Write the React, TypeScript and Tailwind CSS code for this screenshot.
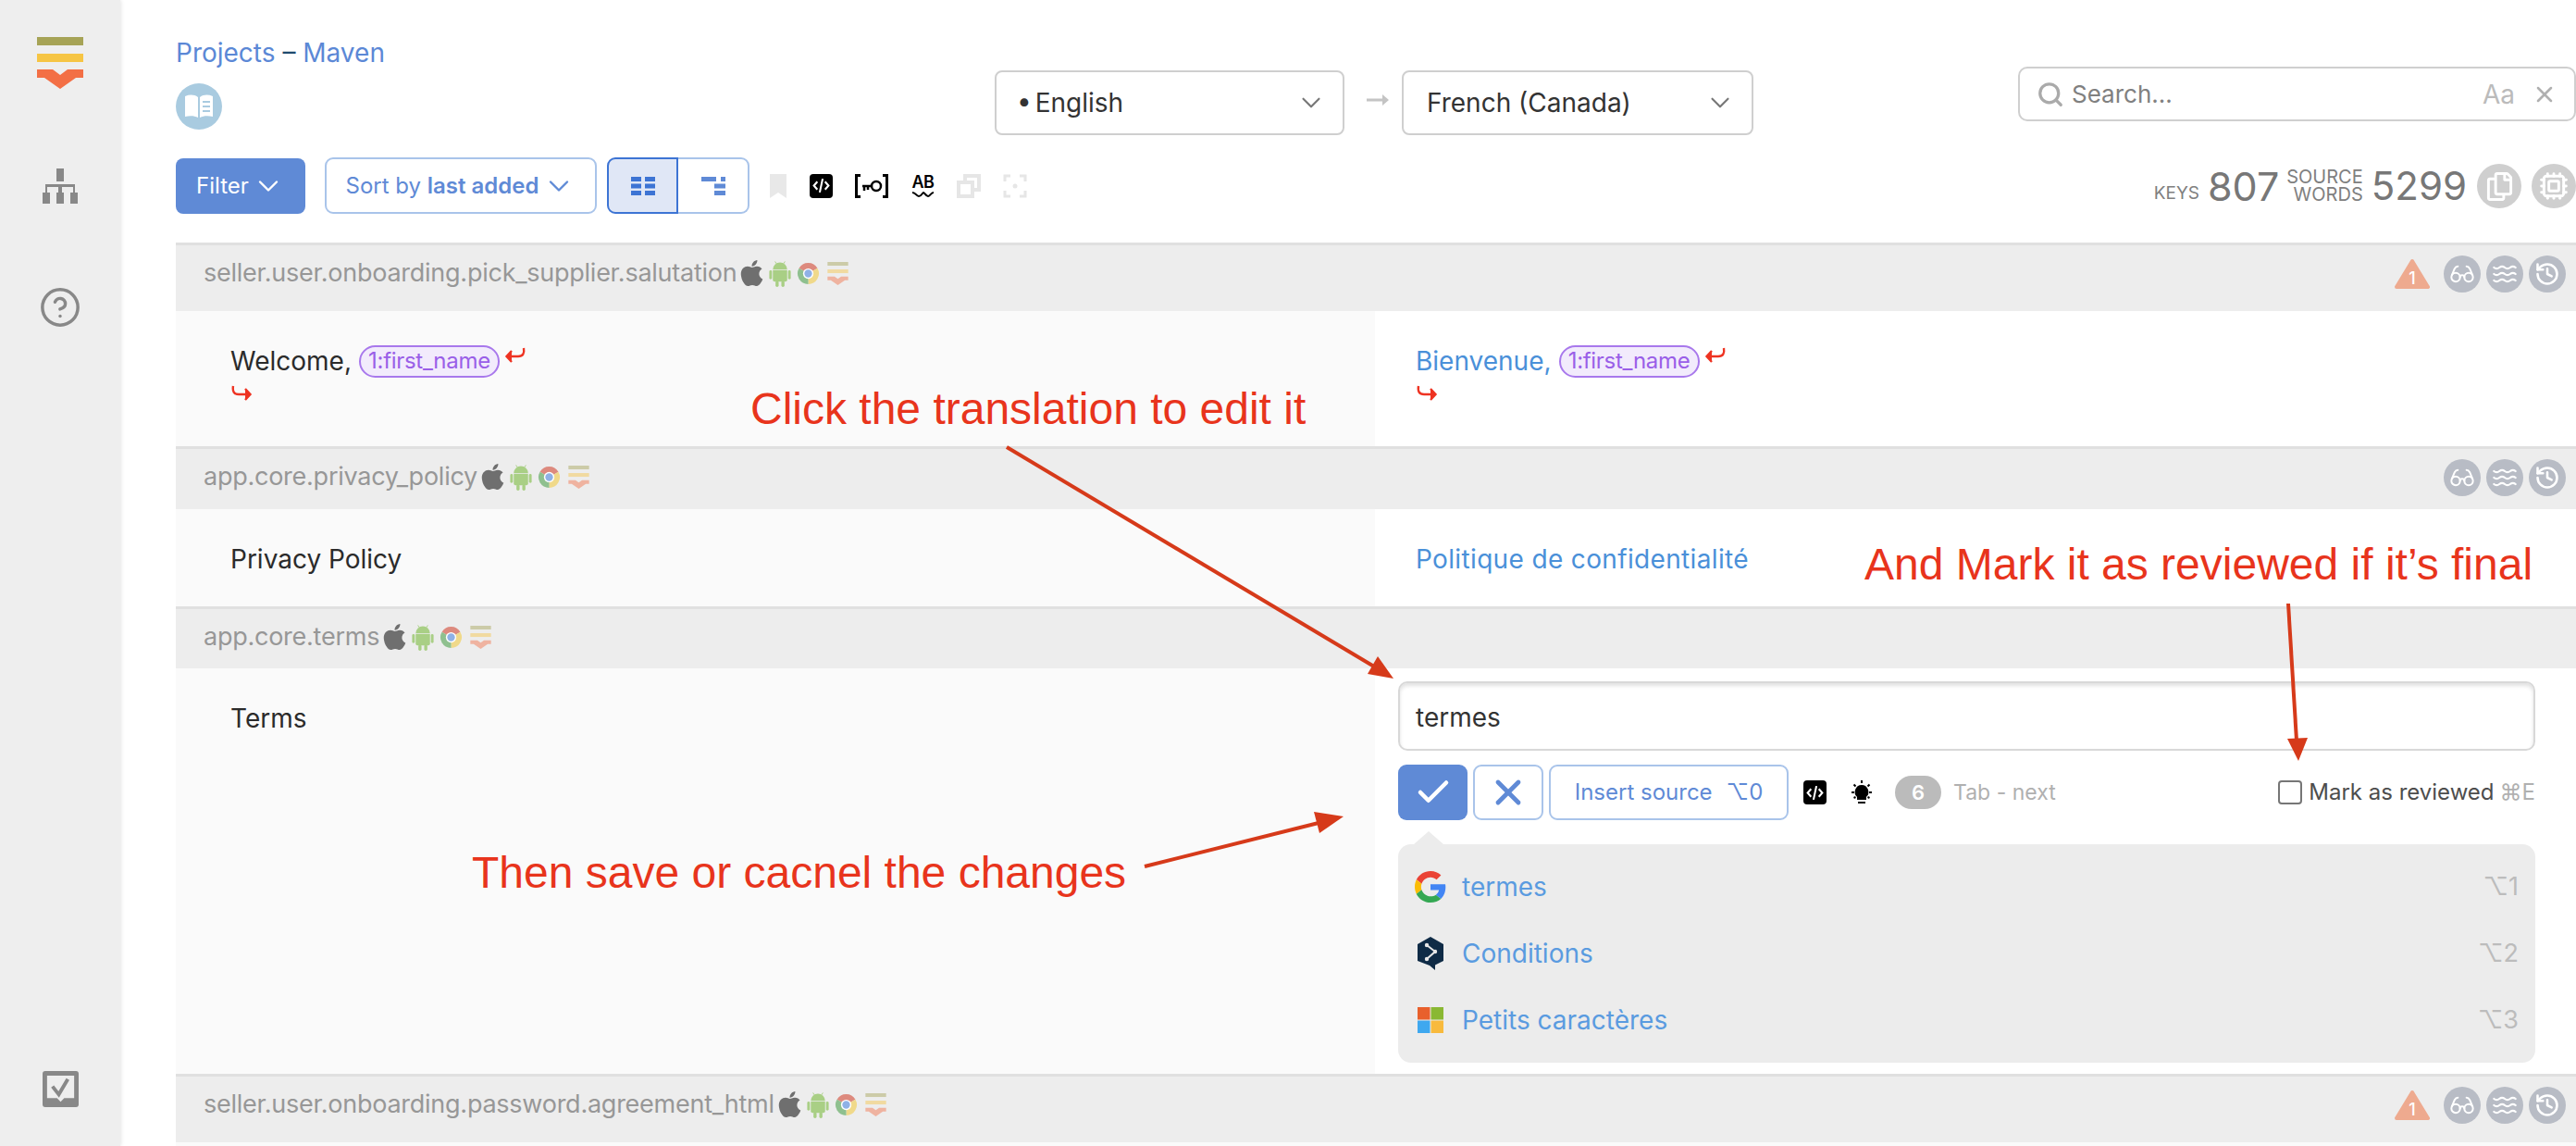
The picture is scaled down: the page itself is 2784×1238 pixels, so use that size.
import { ChevronDown, CircleHelp, Cpu, Glasses, History, Search, Waves, X, Check } from "lucide-react";
import { FaApple, FaRegCopy } from "react-icons/fa";

function Logo({ className }: { className: string }) {
  return (
    <svg viewBox="0 0 50 56" className={className}>
      <rect width="50" height="9" fill="#a6a356" />
      <rect y="18" width="50" height="9" fill="#f6c544" />
      <polygon points="0,35 17,35 25,41 33,35 50,35 50,44 42,44 25,56 8,44 0,44" fill="#f36f45" />
    </svg>
  );
}

function Chrome({ className }: { className: string }) {
  return (
    <svg viewBox="0 0 24 24" className={className}>
      <path d="M12 12L2.47 6.5A11 11 0 0 1 21.53 6.5Z" fill="#dd8a7e" />
      <path d="M12 12L21.53 6.5A11 11 0 0 1 12 23Z" fill="#f0d98a" />
      <path d="M12 12L12 23A11 11 0 0 1 2.47 6.5Z" fill="#8fc08f" />
      <circle cx="12" cy="12" r="5.4" fill="#fff" />
      <circle cx="12" cy="12" r="4" fill="#8fb1e6" />
    </svg>
  );
}

function Android({ className }: { className: string }) {
  return (
    <svg viewBox="0 0 24 30" className={className} fill="#a9cf85">
      <path d="M4 10.500A8 8 0 0 1 20 10.500Z" />
      <path d="M8 4L6.500 1.500M16 4L17.500 1.500" stroke="#a9cf85" strokeWidth="1" />
      <path d="M4 11.500H20V22A2 2 0 0 1 18 24H6A2 2 0 0 1 4 22Z" />
      <rect y="11.500" width="3" height="10" rx="1.500" />
      <rect x="21" y="11.500" width="3" height="10" rx="1.500" />
      <rect x="7" y="23" width="3.500" height="7" rx="1.700" />
      <rect x="13.500" y="23" width="3.500" height="7" rx="1.700" />
    </svg>
  );
}

function CodeIcon() {
  return (
    <span className="flex h-[26px] w-[25px] items-center justify-center rounded-[4px] bg-black text-white">
      <svg viewBox="0 0 20 20" className="h-[21px] w-[21px]" fill="none" stroke="currentColor" strokeWidth="2">
        <path d="M6 6l-3.500 4L6 14M14 6l3.500 4L14 14M11.500 3l-3 14" />
      </svg>
    </span>
  );
}

function Platforms() {
  return (
    <span className="ml-[4px] flex items-center gap-[6px]">
      <FaApple className="h-[32px] w-[25px] text-[#6f6f6f]" />
      <Android className="h-[29px] w-[24px]" />
      <Chrome className="h-[25px] w-[25px]" />
      <Logo className="h-[25px] w-[27px] opacity-45" />
    </span>
  );
}

function RoundAction({ children }: { children: React.ReactNode }) {
  return <span className="flex h-[40px] w-[40px] items-center justify-center rounded-full bg-[#b8bcc5] text-white">{children}</span>;
}

function Warning() {
  return (
    <span className="relative mr-[9px] block h-[34px] w-[38px]">
      <svg viewBox="0 0 38 34" className="h-full w-full">
        <path d="M19 3L36 31H2Z" fill="#eeaa8f" stroke="#eeaa8f" strokeWidth="4" strokeLinejoin="round" />
      </svg>
      <span className="absolute inset-x-0 bottom-[1px] text-center text-[18px] leading-[22px] font-medium text-white">1</span>
    </span>
  );
}

function RowActions({ warning }: { warning?: boolean }) {
  return (
    <div className="flex items-center gap-[6px]">
      {warning && <Warning />}
      <RoundAction>
        <Glasses className="h-[28px] w-[28px]" strokeWidth={1.7} />
      </RoundAction>
      <RoundAction>
        <Waves className="h-[28px] w-[28px]" strokeWidth={1.9} />
      </RoundAction>
      <RoundAction>
        <History className="h-[28px] w-[28px]" strokeWidth={2.2} />
      </RoundAction>
    </div>
  );
}

function KeyHeader({ name, heightClass, warning }: { name: string; heightClass: string; warning?: boolean }) {
  return (
    <div className={`flex items-start justify-between border-t-[3px] border-[#e0e0e0] bg-[#ededed] pt-[11px] pr-[11px] pl-[30px] ${heightClass}`}>
      <div className="flex h-[38px] items-center text-[27px] tracking-[-0.25px] text-[#979797]">
        {name}
        <Platforms />
      </div>
      <RowActions warning={warning} />
    </div>
  );
}

function Variable() {
  return (
    <span className="mx-[8px] inline-flex h-[35px] w-[152px] items-center justify-center rounded-full border-2 border-[#a878ec] bg-[#f2ebfc] text-[24px] tracking-[-0.3px] text-[#9a5fe8]">
      1:first_name
    </span>
  );
}

function ReturnArrow() {
  return (
    <svg viewBox="0 0 24 20" className="h-[20px] w-[24px]" fill="none" stroke="#ee3322" strokeWidth="2.4">
      <path d="M21 1c1 6 -1 9 -6 9H4" />
      <path d="M8 4L2.5 10L8 16" fill="#ee3322" />
    </svg>
  );
}

function NewlineArrow() {
  return (
    <svg viewBox="0 0 24 20" className="h-[20px] w-[24px]" fill="none" stroke="#ee3322" strokeWidth="2.4">
      <path d="M3 1c-1 6 1 9 6 9h11" />
      <path d="M16 4l5.5 6L16 16" fill="#ee3322" />
    </svg>
  );
}

function Suggestion({ icon, text, shortcut }: { icon: React.ReactNode; text: string; shortcut: string }) {
  return (
    <div className="flex h-[72px] items-center justify-between pr-[18px] pl-[18px]">
      <div className="flex items-center gap-[17px]">
        <span className="flex w-[34px] justify-center">{icon}</span>
        <span className="text-[28px] text-[#5a9be0]">{text}</span>
      </div>
      <span className="text-[27px] text-[#bcbcbc]">{shortcut}</span>
    </div>
  );
}

function GoogleIcon() {
  return (
    <svg viewBox="0 0 48 48" className="h-[34px] w-[34px]">
      <path fill="#ea4335" d="M24 9.500c3.500 0 6.700 1.200 9.200 3.600l6.900-6.900C35.900 2.400 30.500 0 24 0 14.600 0 6.500 5.400 2.600 13.200l8 6.200C12.400 13.700 17.700 9.500 24 9.500z" />
      <path fill="#4285f4" d="M47 24.500c0-1.600-.1-3.100-.4-4.500H24v9h12.900c-.6 3-2.200 5.500-4.700 7.200l7.700 6C44.400 38.600 47 32.100 47 24.500z" />
      <path fill="#fbbc05" d="M10.500 28.600c-.5-1.400-.8-3-.8-4.600s.3-3.200.8-4.600l-8-6.200C.9 16.500 0 20.100 0 24s.9 7.500 2.600 10.800l7.900-6.200z" />
      <path fill="#34a853" d="M24 48c6.500 0 11.900-2.100 15.900-5.800l-7.700-6c-2.200 1.400-4.900 2.300-8.200 2.300-6.300 0-11.600-4.200-13.500-9.900l-8 6.200C6.500 42.600 14.600 48 24 48z" />
    </svg>
  );
}

function DeeplIcon() {
  return (
    <svg viewBox="0 0 30 36" className="h-[36px] w-[30px]">
      <path d="M15 0L29 8V26L20 30.500V36L14 31L1 26V8Z" fill="#0f2b46" />
      <path d="M11 9L20 16L11 24" fill="none" stroke="#e8e8e8" strokeWidth="2" />
      <circle cx="11" cy="9" r="2.200" fill="#e8e8e8" />
      <circle cx="20" cy="16" r="2.200" fill="#e8e8e8" />
      <circle cx="11" cy="24" r="2.200" fill="#e8e8e8" />
    </svg>
  );
}

function MicrosoftIcon() {
  return (
    <svg viewBox="0 0 28 28" className="h-[28px] w-[28px]">
      <rect width="13.500" height="13.500" fill="#e8602c" />
      <rect x="14.500" width="13.500" height="13.500" fill="#8ab833" />
      <rect y="14.500" width="13.500" height="13.500" fill="#3fa8ef" />
      <rect x="14.500" y="14.500" width="13.500" height="13.500" fill="#f8ba3d" />
    </svg>
  );
}

function Sidebar() {
  return (
    <aside className="flex h-[1238px] w-[130px] shrink-0 flex-col items-center bg-[#eeeeee] pt-[40px] shadow-[1px_0_4px_rgba(0,0,0,0.1)]">
      <Logo className="h-[56px] w-[50px]" />
      <svg viewBox="0 0 38 38" className="mt-[86px] h-[38px] w-[38px]" fill="#888">
        <rect x="15" width="8" height="14" />
        <rect x="0" y="26" width="8" height="12" />
        <rect x="15" y="26" width="8" height="12" />
        <rect x="30" y="26" width="8" height="12" />
        <path d="M3 26V17H35V26H33V20H21V26H17V20H5V26Z" />
      </svg>
      <CircleHelp className="mt-[89px] h-[46px] w-[46px] text-[#888]" strokeWidth={1.8} />
      <svg viewBox="0 0 40 40" className="mt-auto mb-[42px] h-[39px] w-[41px]">
        <path d="M3 0H37A3 3 0 0 1 40 3V37A3 3 0 0 1 37 40H3A3 3 0 0 1 0 37V3A3 3 0 0 1 3 0Z" fill="#888" />
        <path d="M5 5H35V30H24L20 34L16 30H5Z" fill="#eee" />
        <path d="M11 17L18 26L28 9" fill="none" stroke="#888" strokeWidth="4" />
      </svg>
    </aside>
  );
}

function Toolbar() {
  return (
    <div className="flex h-[92px] items-start justify-between">
      <div className="flex items-center">
        <button className="flex h-[60px] w-[140px] items-center justify-center gap-[3px] rounded-[8px] bg-[#5f8ad6] text-[24px] text-white">
          Filter
          <ChevronDown className="h-[36px] w-[36px]" strokeWidth={1.6} />
        </button>
        <button className="ml-[21px] flex h-[61px] w-[294px] items-center justify-center gap-[4px] rounded-[9px] border-2 border-[#a9c4ea] text-[24px] text-[#5f8ad6]">
          <span>
            Sort by <span className="font-semibold">last added</span>
          </span>
          <ChevronDown className="h-[36px] w-[36px]" strokeWidth={1.6} />
        </button>
        <div className="ml-[11px] flex h-[61px]">
          <span className="flex w-[77px] items-center justify-center rounded-l-[9px] border-2 border-[#3d74d4] bg-[#e0e7f6]">
            <svg viewBox="0 0 26 20" className="h-[20px] w-[26px]" fill="#3d74d4">
              <rect width="11" height="5" />
              <rect x="15" width="11" height="5" />
              <rect y="7.500" width="11" height="5" />
              <rect x="15" y="7.500" width="11" height="5" />
              <rect y="15" width="11" height="5" />
              <rect x="15" y="15" width="11" height="5" />
            </svg>
          </span>
          <span className="flex w-[77px] items-center justify-center rounded-r-[9px] border-2 border-l-0 border-[#a9c4ea]">
            <svg viewBox="0 0 26 20" className="h-[20px] w-[26px]" fill="#5f8ad6">
              <rect width="16" height="5" />
              <rect x="14" y="7.500" width="12" height="5" />
              <rect x="14" y="15" width="12" height="5" />
              <rect x="21" width="5" height="5" />
            </svg>
          </span>
        </div>
        <svg viewBox="0 0 18 26" className="ml-[22px] h-[26px] w-[18px]" fill="#e8e8e8">
          <path d="M0 0H18V26L9 20L0 26Z" />
        </svg>
        <span className="ml-[25px]">
          <CodeIcon />
        </span>
        <svg viewBox="0 0 36 26" className="ml-[24px] h-[26px] w-[36px]" fill="none" stroke="#000" strokeWidth="3">
          <path d="M6 1.500H1.500V24.500H6M30 1.500H34.500V24.500H30" />
          <circle cx="23" cy="13" r="5" strokeWidth="2.500" />
          <path d="M18 13H8M10 13V18M14 13V17" strokeWidth="2.500" />
        </svg>
        <span className="ml-[25px] flex w-[25px] flex-col items-center">
          <span className="text-[18px] leading-[18px] font-semibold tracking-[-0.5px] text-black">AB</span>
          <svg viewBox="0 0 25 8" className="h-[8px] w-[25px]" fill="none" stroke="#000" strokeWidth="2">
            <path d="M1 2c4 0 4 4 7 4s4 -4 5 -4s3 4 5 4s3 -4 6 -4" />
          </svg>
        </span>
        <svg viewBox="0 0 26 26" className="ml-[24px] h-[26px] w-[26px]" fill="none" stroke="#e6e6e6" strokeWidth="4">
          <path d="M9 9V2H24V17H17" />
          <rect x="2" y="9" width="15" height="15" />
        </svg>
        <svg viewBox="0 0 26 26" className="ml-[24px] h-[26px] w-[26px]" fill="none" stroke="#e6e6e6" strokeWidth="3">
          <path d="M8 2H2V8M18 2H24V8M8 24H2V18M18 24H24V18" />
          <circle cx="13" cy="13" r="2.500" fill="#e6e6e6" stroke="none" />
        </svg>
      </div>
      <div className="mt-[7px] flex items-center text-[#777]">
        <span className="mt-[14px] text-[19px] leading-none text-[#808080]">KEYS</span>
        <span className="ml-[9px] text-[43px] leading-[48px]">807</span>
        <span className="ml-[8px] flex flex-col items-end text-[20px] leading-[19px] text-[#808080]">
          <span>SOURCE</span>
          <span>WORDS</span>
        </span>
        <span className="ml-[9px] text-[42px] leading-[48px]">5299</span>
        <span className="ml-[11px] flex h-[48px] w-[48px] items-center justify-center rounded-full bg-[#cfcfcf] text-white">
          <FaRegCopy className="h-[31px] w-[31px]" />
        </span>
        <span className="ml-[11px] flex h-[48px] w-[48px] items-center justify-center rounded-full bg-[#cfcfcf] text-white">
          <Cpu className="h-[32px] w-[32px]" strokeWidth={2.2} />
        </span>
      </div>
    </div>
  );
}

function TopBar() {
  return (
    <div className="flex h-[170px] items-start">
      <div className="w-[885px] pt-[38px]">
        <div className="text-[28px] leading-[38px] text-[#5b88d6]">
          Projects <span className="text-[#1f4a6e]">–</span> Maven
        </div>
        <span className="mt-[14px] flex h-[50px] w-[50px] items-center justify-center rounded-full bg-[#a9cbe0]">
          <svg viewBox="0 0 32 28" className="h-[28px] w-[32px]" fill="#fff">
            <path d="M1 3c5 -2 10 -2 14 1V26c-4 -2 -9 -2 -14 -1Z" />
            <path d="M17 4c4 -3 9 -3 14 -1V25c-5 -1 -10 -1 -14 1Z" />
            <path d="M20 9h8M20 14h8M20 19h8" stroke="#a9cbe0" strokeWidth="2" fill="none" />
          </svg>
        </span>
      </div>
      <div className="mt-[76px] flex items-center">
        <div className="flex h-[70px] w-[378px] items-center justify-between rounded-[8px] border-2 border-[#cfcfcf] pr-[17px] pl-[22px] text-[28px] text-[#333]">
          <span className="[word-spacing:-4px]">• English</span>
          <ChevronDown className="h-[34px] w-[34px] text-[#777]" strokeWidth={1.5} />
        </div>
        <svg viewBox="0 0 24 20" className="mt-[-6px] mr-[14px] ml-[24px] h-[20px] w-[24px]" fill="#c4c4c4">
          <path d="M0 8.500H17V4L24 10L17 16V11.500H0Z" />
        </svg>
        <div className="flex h-[70px] w-[380px] items-center justify-between rounded-[8px] border-2 border-[#cfcfcf] pr-[17px] pl-[25px] text-[28px] text-[#333]">
          <span>French (Canada)</span>
          <ChevronDown className="h-[34px] w-[34px] text-[#777]" strokeWidth={1.5} />
        </div>
      </div>
      <div className="mt-[72px] ml-auto flex h-[59px] w-[603px] items-center rounded-[10px] border-2 border-[#cfcfcf] pr-[18px] pl-[18px]">
        <Search className="h-[30px] w-[30px] text-[#aaa]" strokeWidth={2.6} />
        <span className="ml-[8px] text-[26px] text-[#808080]">Search...</span>
        <span className="ml-auto text-[28px] text-[#bbb]">Aa</span>
        <X className="ml-[18px] h-[28px] w-[28px] text-[#b0b0b0]" strokeWidth={2.2} />
      </div>
    </div>
  );
}

function Editor() {
  return (
    <div className="pt-[14px] pr-[44px] pl-[25px]">
      <div className="flex h-[75px] items-center rounded-[10px] border-2 border-[#d8d8d8] bg-white pt-[3px] pl-[17px] text-[28px] text-[#333] shadow-[inset_0_3px_4px_rgba(0,0,0,0.12)]">
        termes
      </div>
      <div className="mt-[15px] flex h-[60px] items-center">
        <button className="flex h-[60px] w-[75px] items-center justify-center rounded-[9px] bg-[#5f8ad6] text-white">
          <Check className="h-[42px] w-[42px]" strokeWidth={2.6} />
        </button>
        <button className="ml-[6px] flex h-[60px] w-[76px] items-center justify-center rounded-[9px] border-2 border-[#a9c4ea] text-[#5f8ad6]">
          <X className="h-[44px] w-[44px]" strokeWidth={2.6} />
        </button>
        <button className="ml-[6px] flex h-[60px] w-[259px] items-center justify-center gap-[15px] rounded-[9px] border-2 border-[#a9c4ea] text-[24px] text-[#5f8ad6]">
          <span>Insert source</span>
          <span>⌥0</span>
        </button>
        <span className="ml-[16px]">
          <CodeIcon />
        </span>
        <svg viewBox="0 0 26 26" className="ml-[25px] h-[26px] w-[26px]" stroke="#000" strokeWidth="2" fill="#000">
          <path d="M13 6a6.500 6.500 0 0 0 -4 11.500V20H17V17.500A6.500 6.500 0 0 0 13 6Z" />
          <path d="M9 24H17M13 0V3M2 13H5M21 13H24M4.500 4.500L6.500 6.500M21.500 4.500L19.500 6.500M4.500 19L6.500 18M21.500 19L19.500 18" fill="none" />
        </svg>
        <span className="ml-[23px] flex h-[36px] w-[50px] items-center justify-center rounded-full bg-[#bbbbbb] text-[22px] font-semibold text-white">6</span>
        <span className="ml-[13px] text-[23px] text-[#b0b0b0]">Tab - next</span>
        <label className="ml-auto flex items-center text-[24px] text-[#4d4d4d]">
          <span className="h-[26px] w-[26px] rounded-[4px] border-2 border-[#767676] bg-white" />
          <span className="ml-[7px]">Mark as reviewed</span>
          <span className="ml-[6px] text-[24px] text-[#b0b0b0]">⌘E</span>
        </label>
      </div>
      <div className="relative mt-[26px] h-[236px] rounded-[14px] bg-[#ececec] pt-[10px]">
        <span className="absolute top-[-14px] left-[17px] h-0 w-0 border-x-[16px] border-b-[14px] border-x-transparent border-b-[#ececec]" />
        <Suggestion icon={<GoogleIcon />} text="termes" shortcut="⌥1" />
        <Suggestion icon={<DeeplIcon />} text="Conditions" shortcut="⌥2" />
        <Suggestion icon={<MicrosoftIcon />} text="Petits caractères" shortcut="⌥3" />
      </div>
    </div>
  );
}

function Annotations() {
  return (
    <>
      <svg viewBox="0 0 2784 1238" className="pointer-events-none absolute top-0 left-0 h-[1238px] w-[2784px]">
        <g stroke="#d63a1a" strokeWidth="4" fill="#d63a1a">
          <path d="M1088 483L1490 723" />
          <path d="M2473 652L2482 800" />
          <path d="M1237 936L1425 889" />
          <polygon points="1506,733 1478,728 1489,709" stroke="none" />
          <polygon points="2484,822 2472,798 2494,797" stroke="none" />
          <polygon points="1452,882 1426,900 1420,877" stroke="none" />
        </g>
      </svg>
      <span className="absolute top-[414px] left-[811px] font-['Liberation_Sans',sans-serif] text-[48px] leading-[56px] text-[#e8341c]">Click the translation to edit it</span>
      <span className="absolute top-[582px] left-[2015px] font-['Liberation_Sans',sans-serif] text-[48px] leading-[56px] text-[#e8341c]">And Mark it as reviewed if it’s final</span>
      <span className="absolute top-[915px] left-[510px] font-['Liberation_Sans',sans-serif] text-[48px] leading-[56px] text-[#e8341c]">Then save or cacnel the changes</span>
    </>
  );
}

export default function App() {
  return (
    <div className="relative flex h-[1238px] w-[2784px] overflow-hidden bg-white font-['Inter','DejaVu_Sans',sans-serif]">
      <Sidebar />
      <main className="ml-[60px] min-w-0 flex-1">
        <TopBar />
        <Toolbar />
        <KeyHeader name="seller.user.onboarding.pick_supplier.salutation" heightClass="h-[74px]" warning />
        <div className="grid h-[146px] grid-cols-[1296px_1fr] text-[28px] leading-[36px]">
          <div className="bg-[#fafafa] pt-[36px] pl-[59px] text-[#2b2b2b]">
            <div className="flex items-center">
              Welcome,
              <Variable />
              <span className="mt-[-10px] ml-[-3px]"><ReturnArrow /></span>
            </div>
            <div className="mt-[8px]"><NewlineArrow /></div>
          </div>
          <div className="pt-[36px] pl-[44px] text-[#4a90d9]">
            <div className="flex items-center">
              Bienvenue,
              <Variable />
              <span className="mt-[-10px] ml-[-3px]"><ReturnArrow /></span>
            </div>
            <div className="mt-[8px]"><NewlineArrow /></div>
          </div>
        </div>
        <KeyHeader name="app.core.privacy_policy" heightClass="h-[68px]" />
        <div className="grid h-[105px] grid-cols-[1296px_1fr] text-[28px] leading-[36px]">
          <div className="bg-[#fafafa] pt-[36px] pl-[59px] text-[#2b2b2b]">Privacy Policy</div>
          <div className="pt-[36px] pl-[44px] tracking-[0.35px] text-[#4a90d9]">Politique de confidentialité</div>
        </div>
        <div className="flex h-[67px] items-start border-t-[3px] border-[#e0e0e0] bg-[#ededed] pt-[11px] pl-[30px]">
          <div className="flex h-[38px] items-center text-[27px] tracking-[-0.25px] text-[#979797]">
            app.core.terms
            <Platforms />
          </div>
        </div>
        <div className="grid h-[438px] grid-cols-[1296px_1fr] text-[28px] leading-[36px]">
          <div className="bg-[#fafafa] pt-[36px] pl-[59px] text-[#2b2b2b]">Terms</div>
          <Editor />
        </div>
        <KeyHeader name="seller.user.onboarding.password.agreement_html" heightClass="h-[74px]" warning />
        <div className="h-[4px] bg-[#fafafa]" />
      </main>
      <Annotations />
    </div>
  );
}
